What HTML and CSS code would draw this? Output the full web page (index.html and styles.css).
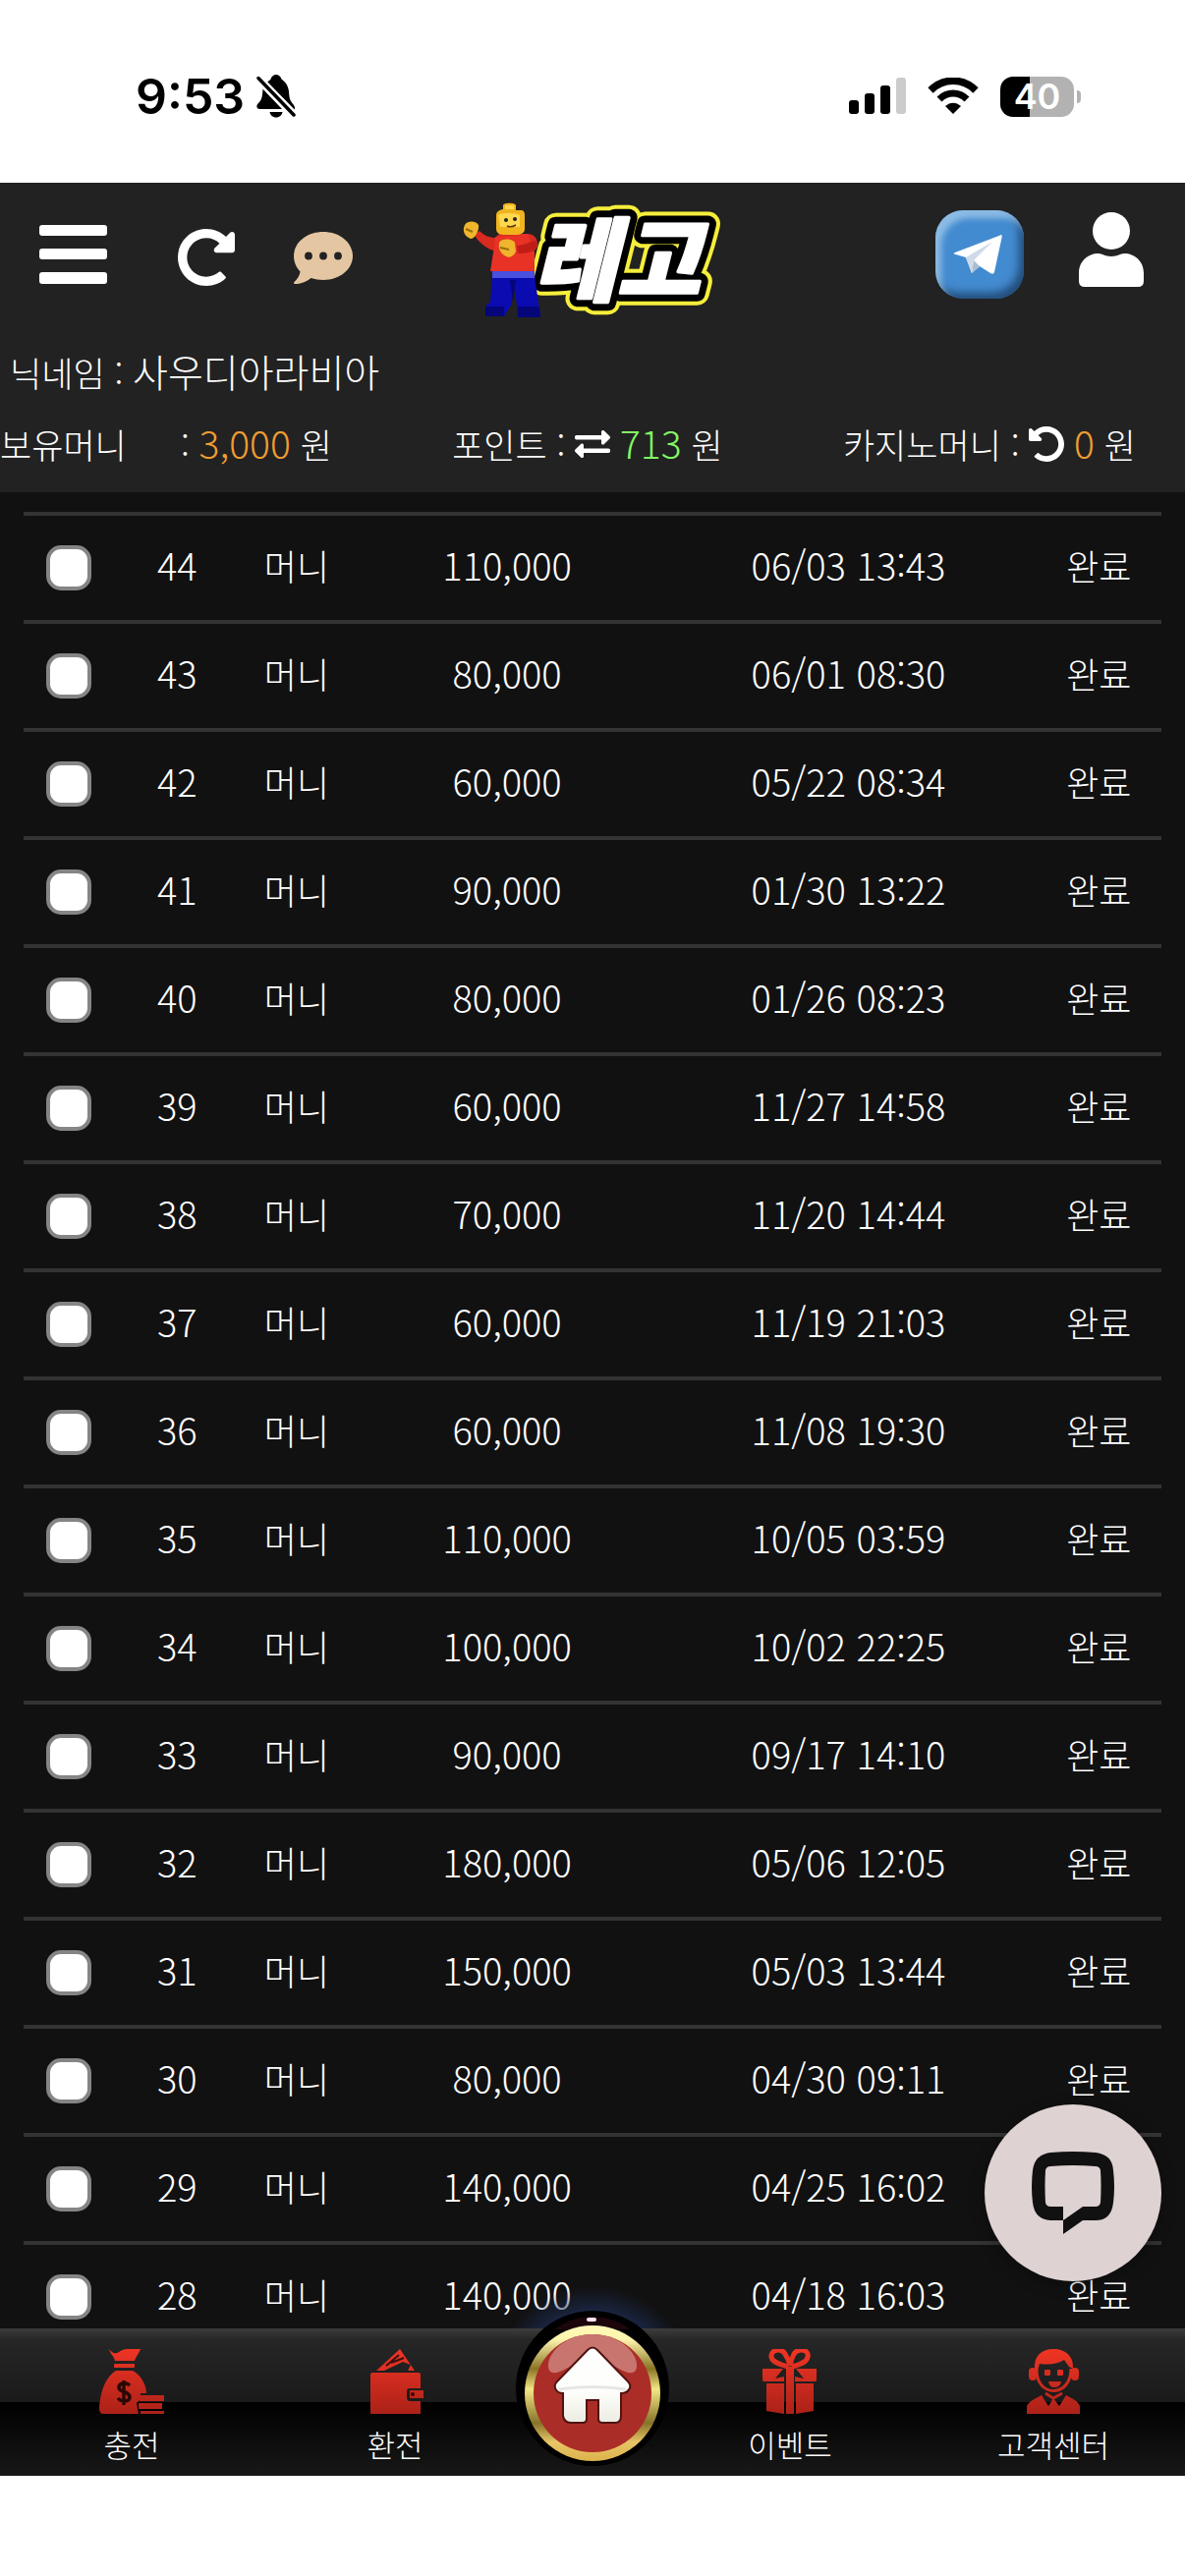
FILE: index.html
```html
<!DOCTYPE html>
<html lang="ko">
<head>
  <meta charset="UTF-8">
  <meta name="viewport" content="width=device-width, initial-scale=1.0">
  <title>레고</title>
  <link rel="stylesheet" href="styles.css">
</head>
<body>
  <div class="status-bar">
    <div class="status-left">
      <span class="time">9:53</span>
      <svg width="40" height="44" viewBox="0 0 40 44">
        <path d="M11 7.500C13 6 14 5.500 14.500 4.500C15.500 1.500 17.500 0 20 0C22.500 0 24.500 1.500 25.500 4.500C26 5.500 32 8 33 17C33.500 25 34 26 38 31C39 32.500 39.500 34 38.500 35.500L11 7.500Z"/>
        <path d="M6.500 14.500L26 35H3.500C0 35 -.5 31.500 1.500 29.500C5 26 6 24 6.500 14.500Z"/>
        <path d="M13.500 38H26.500C26 41 23.500 43.500 20 43.500C16.500 43.500 14 41 13.500 38Z"/>
        <path d="M2 3.500L38 41" stroke="#fff" stroke-width="8"/>
        <path d="M2 3.500L38 41" stroke="#000" stroke-width="3.500" stroke-linecap="round"/>
      </svg>
    </div>
    <div class="status-right">
      <svg width="58" height="38" viewBox="0 0 58 38">
        <rect y="23" width="10" height="14" rx="3"/>
        <rect x="16" y="16" width="10" height="21" rx="3"/>
        <rect x="32" y="8" width="10" height="29" rx="3"/>
        <rect x="48" width="10" height="37" rx="3" fill="#cbcbcb"/>
      </svg>
      <svg width="52" height="38" viewBox="0 0 52 38">
        <path d="M3 13C16 0 36 0 49 13" fill="none" stroke="#000" stroke-width="7.500"/>
        <path d="M12 22C20 14 32 14 40 22" fill="none" stroke="#000" stroke-width="7"/>
        <path d="M18 29C23 24.500 29 24.500 34 29L26 37Z"/>
      </svg>
      <div class="battery"><span>40</span></div>
    </div>
  </div>

  <header>
    <div class="toolbar">
      <div class="tools">
        <button class="menu" aria-label="메뉴">
          <svg width="69" height="60" viewBox="0 0 69 60" fill="#fff">
            <rect width="69" height="11" rx="3"/>
            <rect y="24" width="69" height="11" rx="3"/>
            <rect y="48" width="69" height="12" rx="3"/>
          </svg>
        </button>
        <button aria-label="새로고침">
          <svg viewBox="8 0 496 512" class="reload">
            <use href="#redo"/>
          </svg>
        </button>
        <button aria-label="쪽지">
          <svg width="60" height="53" viewBox="0 0 60 53">
            <path fill="#e4c6a2" d="M30 0C47 0 60 11 60 24.500S47 49 30 49C25.500 49 21.500 48 17.500 47C13 50.500 7 53.500 1 53C0 53 -.3 51.800.5 51C3.500 48 6 44.500 6.500 40.500C2.500 36 0 31 0 24.500C0 11 13 0 30 0Z"/>
            <circle cx="15" cy="24.500" r="3.900" fill="#222"/>
            <circle cx="30" cy="24.500" r="3.900" fill="#222"/>
            <circle cx="45" cy="24.500" r="3.900" fill="#222"/>
          </svg>
        </button>
      </div>

      <a href="#" class="logo" aria-label="레고">
        <svg width="264" height="132" viewBox="-1 -7 264 132">
          <!-- lettering -->
          <g class="logo-text">
            <text x="72" y="92" class="edge-yellow">레고</text>
            <text x="72" y="92" class="edge-black">레고</text>
            <text x="72" y="92" class="face">레고</text>
          </g>
          <!-- figure -->
          <path fill="#0a0bb0" d="M30 73H73L79 116H56L55 104L51 78L50 102L42 115H23L24 104L28 100Z"/>
          <path fill="#05067a" d="M56 105H78L79 116H56ZM23 105H42V115H23ZM48 78L51 100L54 78Z"/>
          <path fill="#4a4fe0" d="M30 68H73V76H30Z"/>
          <path fill="#d92a20" d="M37 31H66C72 31 76 35 76 42C76 49 69 50 56 51L48 42L31 48C22 45 14 37 12 32L17 28C22 33 28 35 33 35Z"/>
          <path fill="#e83226" d="M33 34L66 31L73 50L73 69H28L32 44Z"/>
          <path fill="#c01d16" d="M55 43C62 43 68 39 74 38C78 46 72 51 56 51Z"/>
          <path fill="#f0b41e" d="M41 2C41-1 54-1 54 2V7H59C62 7 63 9 63 12V26C63 30 59 32 54 32H42C37 32 34 30 34 26V12C34 9 36 7 41 6Z"/>
          <path fill="#ffd84e" d="M43 2H52V6H43ZM36 12C42 9 54 10 58 12V24H38Z"/>
          <circle cx="44" cy="17" r="2" fill="#222"/>
          <circle cx="53" cy="16" r="2" fill="#222"/>
          <path d="M45 23Q49 25 54 22" fill="none" stroke="#5a3a00" stroke-width="1.500"/>
          <path fill="#efb52c" d="M2 22C5 17 14 18 16 22C17 28 12 36 8 36C2 34-1 28 2 22Z"/>
          <path fill="#efb52c" d="M37 40C40 35 51 36 53 40L54 49C52 54 47 56 44 54C38 51 36 46 37 40Z"/>
          <path d="M3 26L10 29M38 45L47 47" stroke="#9a6c10" stroke-width="2"/>
        </svg>
      </a>

      <div class="tools right">
        <a href="#" class="telegram" aria-label="텔레그램">
          <svg width="90" height="90" viewBox="0 0 90 90">
            <path fill="#fff" d="M67 25Q68 25 67.500 28L60 63Q59 66 56 64L45 57L37 64L31 48L19 44.500Q18 43.500 20 43Z"/>
            <path fill="#cfdaea" d="M31 48L58 32L39 51L37 64Z"/>
            <path fill="#a9bfd0" d="M39 51L45 57L37 64Z"/>
          </svg>
        </a>
        <a href="#" class="user" aria-label="내 정보">
          <svg width="66" height="76" viewBox="0 0 66 76" fill="#fff">
            <circle cx="33" cy="19" r="19"/>
            <path d="M0 62C0 50 9 42 20 42C24 42 26 45 33 45C40 45 42 42 46 42C57 42 66 50 66 62V70Q66 76 60 76H6Q0 76 0 70Z"/>
          </svg>
        </a>
      </div>
    </div>

    <div class="nickname">닉네임 : <span>사우디아라비아</span></div>

    <div class="wallets">
      <div class="wallet"><span class="wallet-label">보유머니</span>: <b class="orange">3,000</b> 원</div>
      <div class="wallet">포인트 :
        <svg width="36" height="36" viewBox="0 0 512 512" fill="#fff">
          <path d="M0 168v-16c0-13.255 10.745-24 24-24h360V80c0-21.367 25.899-32.042 40.971-16.971l80 80c9.372 9.373 9.372 24.569 0 33.941l-80 80C409.956 271.982 384 261.456 384 240v-48H24c-13.255 0-24-10.745-24-24zm488 152H128v-48c0-21.314-25.862-32.080-40.971-16.971l-80 80c-9.372 9.373-9.372 24.569 0 33.941l80 80C102.057 463.997 128 453.437 128 432v-48h360c13.255 0 24-10.745 24-24v-16c0-13.255-10.745-24-24-24z"/>
        </svg>
        <b class="green">713</b> 원</div>
      <div class="wallet">카지노머니 :
        <svg width="36" height="36" viewBox="8 8 496 496">
          <use href="#redo" transform="translate(512 0) scale(-1 1)"/>
        </svg>
        <b class="orange">0</b> 원</div>
    </div>
  </header>

  <main>
    <table>
      <colgroup>
        <col class="c-check"><col class="c-no"><col class="c-type"><col class="c-amount"><col class="c-date"><col class="c-state">
      </colgroup>
      <tbody>
        <tr><td><input type="checkbox" aria-label="44"></td><td class="num">44</td><td>머니</td><td class="num">110,000</td><td class="num">06/03 13:43</td><td>완료</td></tr>
        <tr><td><input type="checkbox" aria-label="43"></td><td class="num">43</td><td>머니</td><td class="num">80,000</td><td class="num">06/01 08:30</td><td>완료</td></tr>
        <tr><td><input type="checkbox" aria-label="42"></td><td class="num">42</td><td>머니</td><td class="num">60,000</td><td class="num">05/22 08:34</td><td>완료</td></tr>
        <tr><td><input type="checkbox" aria-label="41"></td><td class="num">41</td><td>머니</td><td class="num">90,000</td><td class="num">01/30 13:22</td><td>완료</td></tr>
        <tr><td><input type="checkbox" aria-label="40"></td><td class="num">40</td><td>머니</td><td class="num">80,000</td><td class="num">01/26 08:23</td><td>완료</td></tr>
        <tr><td><input type="checkbox" aria-label="39"></td><td class="num">39</td><td>머니</td><td class="num">60,000</td><td class="num">11/27 14:58</td><td>완료</td></tr>
        <tr><td><input type="checkbox" aria-label="38"></td><td class="num">38</td><td>머니</td><td class="num">70,000</td><td class="num">11/20 14:44</td><td>완료</td></tr>
        <tr><td><input type="checkbox" aria-label="37"></td><td class="num">37</td><td>머니</td><td class="num">60,000</td><td class="num">11/19 21:03</td><td>완료</td></tr>
        <tr><td><input type="checkbox" aria-label="36"></td><td class="num">36</td><td>머니</td><td class="num">60,000</td><td class="num">11/08 19:30</td><td>완료</td></tr>
        <tr><td><input type="checkbox" aria-label="35"></td><td class="num">35</td><td>머니</td><td class="num">110,000</td><td class="num">10/05 03:59</td><td>완료</td></tr>
        <tr><td><input type="checkbox" aria-label="34"></td><td class="num">34</td><td>머니</td><td class="num">100,000</td><td class="num">10/02 22:25</td><td>완료</td></tr>
        <tr><td><input type="checkbox" aria-label="33"></td><td class="num">33</td><td>머니</td><td class="num">90,000</td><td class="num">09/17 14:10</td><td>완료</td></tr>
        <tr><td><input type="checkbox" aria-label="32"></td><td class="num">32</td><td>머니</td><td class="num">180,000</td><td class="num">05/06 12:05</td><td>완료</td></tr>
        <tr><td><input type="checkbox" aria-label="31"></td><td class="num">31</td><td>머니</td><td class="num">150,000</td><td class="num">05/03 13:44</td><td>완료</td></tr>
        <tr><td><input type="checkbox" aria-label="30"></td><td class="num">30</td><td>머니</td><td class="num">80,000</td><td class="num">04/30 09:11</td><td>완료</td></tr>
        <tr><td><input type="checkbox" aria-label="29"></td><td class="num">29</td><td>머니</td><td class="num">140,000</td><td class="num">04/25 16:02</td><td>완료</td></tr>
        <tr><td><input type="checkbox" aria-label="28"></td><td class="num">28</td><td>머니</td><td class="num">140,000</td><td class="num">04/18 16:03</td><td>완료</td></tr>
      </tbody>
    </table>
  </main>

  <nav>
    <a href="#">
      <svg width="66" height="66" viewBox="0 0 66 66" fill="url(#red)">
        <path d="M10 0C14 5 17 5 20 3C23 1 25 0 28 0H42C40 5 37 8 36 12H16C15 7 11 5 10 0Z"/>
        <rect x="15" y="15" width="21" height="4" rx="1"/>
        <path d="M17 22H34C43 27 48 37 48 45H42V51L38 55L40 66H4C1 66 0 63 0 60C1 48 4 30 17 22Z"/>
        <path d="M31 37C27 33 20 35 20 39C20 45 31 42 31 49C31 54 22 54 19 50M25 32V57" fill="none" stroke="#2a0805" stroke-width="3.500"/>
        <path d="M41 47H66V53H41ZM40 55H64V61H40ZM42 63H66V66H42Z"/>
      </svg>
      <span>충전</span>
    </a>
    <a href="#">
      <svg width="66" height="66" viewBox="0 0 66 66" fill="url(#red)">
        <path d="M38 0L53 22H46L49 16L41 13L22 22H14Z"/>
        <path d="M37 6L24 17M42 9L29 14" stroke="#3a1010" stroke-width="2"/>
        <path d="M10 24H57Q59 24 59 26V40H48Q45 40 45 43V49Q45 53 48 53H59V66H8V26Q8 24 10 24Z"/>
        <path d="M48 42H62V50H48Z"/>
        <circle cx="51" cy="46" r="2" fill="#400"/>
      </svg>
      <span>환전</span>
    </a>
    <div class="home-slot">
      <a href="#" class="home" aria-label="홈">
        <svg width="156" height="160" viewBox="0 0 156 160">
          <defs>
            <linearGradient id="red" gradientUnits="userSpaceOnUse" x1="0" y1="0" x2="0" y2="66">
              <stop offset="0" stop-color="#f03524"/>
              <stop offset="1" stop-color="#ab2118"/>
            </linearGradient>
            <linearGradient id="gold" x1="0" y1="0" x2="0" y2="1">
              <stop offset="0" stop-color="#fffab8"/>
              <stop offset=".1" stop-color="#fff6ae"/>
              <stop offset=".32" stop-color="#8a7424"/>
              <stop offset=".47" stop-color="#f2e785"/>
              <stop offset=".72" stop-color="#86732a"/>
              <stop offset=".86" stop-color="#e8c566"/>
              <stop offset="1" stop-color="#dcb34c"/>
            </linearGradient>
            <linearGradient id="house" x1="0" y1="0" x2="0" y2="1">
              <stop offset="0" stop-color="#fff"/>
              <stop offset=".6" stop-color="#fdfdfb"/>
              <stop offset="1" stop-color="#ecece2"/>
            </linearGradient>
            <radialGradient id="glow" gradientUnits="userSpaceOnUse" cx="78" cy="80" r="104">
              <stop offset=".7" stop-color="#1c2b50" stop-opacity=".9"/>
              <stop offset="1" stop-color="#1c2b50" stop-opacity="0"/>
            </radialGradient>
            <path id="redo" fill="#fff" d="M256.455 8c66.269.119 126.437 26.233 170.859 68.685l35.715-35.715C478.149 25.851 504 36.559 504 57.941V192c0 13.255-10.745 24-24 24H345.941c-21.382 0-32.090-25.851-16.971-40.971l41.750-41.750c-30.864-28.899-70.801-44.907-113.230-45.273-92.398-.798-170.283 73.977-169.484 169.442C88.764 348.009 162.184 424 256 424c41.127 0 79.997-14.678 110.629-41.556 4.743-4.161 11.906-3.908 16.368.553l39.662 39.662c4.872 4.872 4.631 12.815-.482 17.433C378.202 479.813 319.926 504 256 504 119.034 504 8.001 392.967 8 256.002 7.999 119.193 119.646 7.755 256.455 8z"/>
          </defs>
          <rect x="-22" y="-31" width="200" height="50" fill="url(#glow)"/>
          <ellipse cx="78" cy="80" rx="78" ry="79"/>
          <path d="M40 20C60 3 96 3 116 20Z" fill="#1d060b"/>
          <rect x="72" y="8" width="10" height="4" rx="2" fill="#ffe3ee"/>
          <circle cx="78" cy="85" r="69" fill="url(#gold)"/>
          <circle cx="78" cy="85" r="60" fill="#ab2d27"/>
          <path d="M33 57C32 47 47 25 78 25C109 25 124 47 123 57C123 66 115 66 105 60Q78 44 51 60C41 66 33 66 33 57Z" fill="#c87570"/>
          <path d="M73 41Q78 36 83 41L114 73C119 78 115 85 107 85V108Q107 115 101 115H88Q84 115 84 111V92H72V111Q72 115 68 115H56Q49 115 48 108V85C41 85 37 78 42 73Z" fill="url(#house)" stroke="#501410" stroke-width="2"/>
          <path d="M44 81Q78 76 112 81" fill="none" stroke="#e6e6e6" stroke-width="3"/>
        </svg>
      </a>
    </div>
    <a href="#">
      <svg width="66" height="66" viewBox="0 0 66 66" fill="url(#red)">
        <path d="M31 18C24 16 15 14 14 8C13 1 24-2 28 5Q32 11 33 17Q34 11 37 5C42-2 53 1 51 8C50 14 42 16 35 18" fill="none" stroke="url(#red)" stroke-width="5"/>
        <path d="M5 20H26L18 30L27 28V33H6Q5 33 5 31ZM60 20H39L47 30L38 28V33H59Q60 33 60 31ZM29 18H37V66H29Z"/>
        <path d="M9 35H27V66L9 63ZM39 35H57V63L39 66Z"/>
      </svg>
      <span>이벤트</span>
    </a>
    <a href="#">
      <svg width="66" height="66" viewBox="0 0 66 66" fill="url(#red)">
        <path d="M14 20C13 8 20 0 33 0C46 0 54 8 53 20L49 18L44 11C36 16 27 16 19 15L17 22Z"/>
        <rect x="8" y="19" width="8" height="13" rx="4"/>
        <rect x="51" y="19" width="8" height="13" rx="4"/>
        <path d="M16 20C15 50 51 50 51 20" fill="none" stroke="url(#red)" stroke-width="3"/>
        <rect x="24" y="21" width="6" height="6" rx="1"/>
        <rect x="37" y="21" width="6" height="6" rx="1"/>
        <path d="M28 33H41Q40 39 34 39Q29 39 28 33Z"/>
        <path d="M6 66V58C9 52 16 50 21 47L28 58L33 50L39 58L46 47C51 50 58 52 60 58V66Z"/>
        <path d="M25 45L33 50L42 45" fill="none" stroke="url(#red)" stroke-width="3"/>
      </svg>
      <span>고객센터</span>
    </a>

    <button class="chat" aria-label="채팅 상담">
      <svg width="84" height="84" viewBox="0 0 84 84" fill="#111">
        <path fill-rule="evenodd" d="M19 1Q42-1 65 1Q82 3 83 19Q85 36 83 52Q81 70 65 70H52L32 84V70H19Q3 69 1 52Q-1 36 1 19Q3 3 19 1ZM19 15Q15 15 14 19Q13 35 14 52Q15 56 19 56H32V70L52 56H65Q69 56 70 52Q71 35 70 19Q69 15 65 15Q42 13 19 15Z"/>
      </svg>
    </button>
  </nav>
</body>
</html>
```
FILE: styles.css
```css
* {
  box-sizing: border-box;
}

body {
  margin: 0;
  height: 100vh;
  display: flex;
  flex-direction: column;
  padding-bottom: 102px;
  background: #fff;
  color: #fff;
  font-family: "Noto Sans CJK KR", "Noto Sans", sans-serif;
  font-weight: 300;
  font-size: 36px;
}

a {
  color: inherit;
  text-decoration: none;
}

button {
  padding: 0;
  border: 0;
  background: none;
  cursor: pointer;
}

svg {
  display: block;
}

/* phone status bar */
.status-bar {
  flex: none;
  height: 186px;
  padding: 10px 106px 0 138px;
  display: flex;
  justify-content: space-between;
  align-items: center;
  color: #000;
  font-family: Inter, sans-serif;
}

.status-left,
.status-right {
  display: flex;
  align-items: center;
}

.status-left {
  gap: 12px;
}

.status-right {
  gap: 22px;
}

.time {
  font-size: 50px;
  line-height: 60px;
  font-weight: 600;
}

.battery {
  position: relative;
  width: 75px;
  height: 41px;
  margin-right: 7px;
  border-radius: 13px;
  background: linear-gradient(90deg, #000 40%, #b2b2b2 40%);
  color: #fff;
  font-size: 36px;
  line-height: 41px;
  font-weight: 600;
  text-align: center;
}

.battery::after {
  content: "";
  position: absolute;
  left: 78px;
  top: 14px;
  width: 4px;
  height: 13px;
  border-radius: 0 4px 4px 0;
  background: #b2b2b2;
}

/* header */
header {
  flex: none;
  background: #222;
  padding-bottom: 22px;
}

.toolbar {
  display: grid;
  grid-template-columns: 1fr auto 1fr;
  align-items: center;
  height: 146px;
  padding: 0 42px 0 40px;
}

.tools {
  display: flex;
  align-items: center;
  gap: 60px;
}

.tools.right {
  justify-content: flex-end;
  gap: 56px;
}

.tools button + button {
  padding-top: 6px;
}

.menu {
  margin-right: 12px;
}

.reload {
  width: 58px;
  height: 60px;
}

.logo {
  padding-top: 14px;
}

.logo svg {
  overflow: visible;
}

.logo-text {
  font-family: "Noto Sans CJK KR", sans-serif;
  font-size: 92px;
  font-weight: 900;
  font-style: italic;
  stroke-linejoin: round;
}

.edge-yellow {
  fill: #f5ee3c;
  stroke: #f5ee3c;
  stroke-width: 25px;
}

.edge-black {
  fill: #000;
  stroke: #000;
  stroke-width: 17px;
}

.face {
  fill: #fff;
  stroke: #fff;
  stroke-width: 3px;
}

.telegram {
  border-radius: 28px;
  background: #438bd0;
  box-shadow: inset 6px 8px 6px rgba(190, 222, 245, .6), inset -5px -6px 8px rgba(20, 50, 85, .7);
}

.user {
  padding-bottom: 10px;
}

.nickname {
  height: 90px;
  padding-left: 10px;
  font-size: 35px;
  line-height: 90px;
}

.nickname span {
  font-size: 39px;
}

.wallets {
  display: flex;
  justify-content: space-between;
  height: 57px;
  padding-right: 50px;
  font-size: 35px;
  line-height: 57px;
}

.wallet {
  white-space: nowrap;
}

.wallet svg {
  display: inline-block;
  vertical-align: -3px;
}

.wallet b {
  font-size: 39px;
  font-weight: 300;
}

.wallet-label {
  display: inline-block;
  width: 184px;
}

.orange {
  color: #f09d32;
}

.green {
  color: #82fa64;
}

/* history list */
main {
  flex: 1;
  min-height: 0;
  overflow: hidden;
  padding: 20px 24px 0;
  background: #111;
}

table {
  width: 100%;
  table-layout: fixed;
  border-collapse: separate;
  border-spacing: 0;
}

.c-check { width: 8%; }
.c-no { width: 11%; }
.c-type { width: 10%; }
.c-amount { width: 27%; }
.c-date { width: 33%; }
.c-state { width: 11%; }

td {
  height: 110px;
  padding: 0 0 6px;
  border-top: 4px solid #333;
  line-height: 56px;
  text-align: center;
  white-space: nowrap;
}

td:first-child {
  padding-bottom: 0;
}

.num {
  font-size: 38px;
}

input[type="checkbox"] {
  appearance: none;
  display: block;
  width: 46px;
  height: 46px;
  margin: 0 auto;
  border: 4px solid #858587;
  border-radius: 15px;
  background: #fff;
}

/* bottom menu */
nav {
  flex: none;
  position: relative;
  display: grid;
  grid-template-columns: 2fr 2fr 1fr 2fr 2fr;
  height: 150px;
  background: linear-gradient(#3c3c3c, #262626 8%, #1a1a1a 50%, #000 50%, #181818);
}

nav > a {
  display: flex;
  flex-direction: column;
  align-items: center;
  padding-top: 21px;
  font-size: 31px;
  line-height: 62px;
}

.home-slot {
  position: relative;
}

.home {
  position: absolute;
  left: 50%;
  top: -19px;
  margin-left: -78px;
}

.home svg {
  overflow: visible;
}

.chat {
  position: absolute;
  right: 24px;
  bottom: 198px;
  display: flex;
  align-items: center;
  justify-content: center;
  width: 180px;
  height: 180px;
  border-radius: 50%;
  background: #ded2d2;
  box-shadow: 0 4px 16px rgba(0, 0, 0, .3);
}
```
